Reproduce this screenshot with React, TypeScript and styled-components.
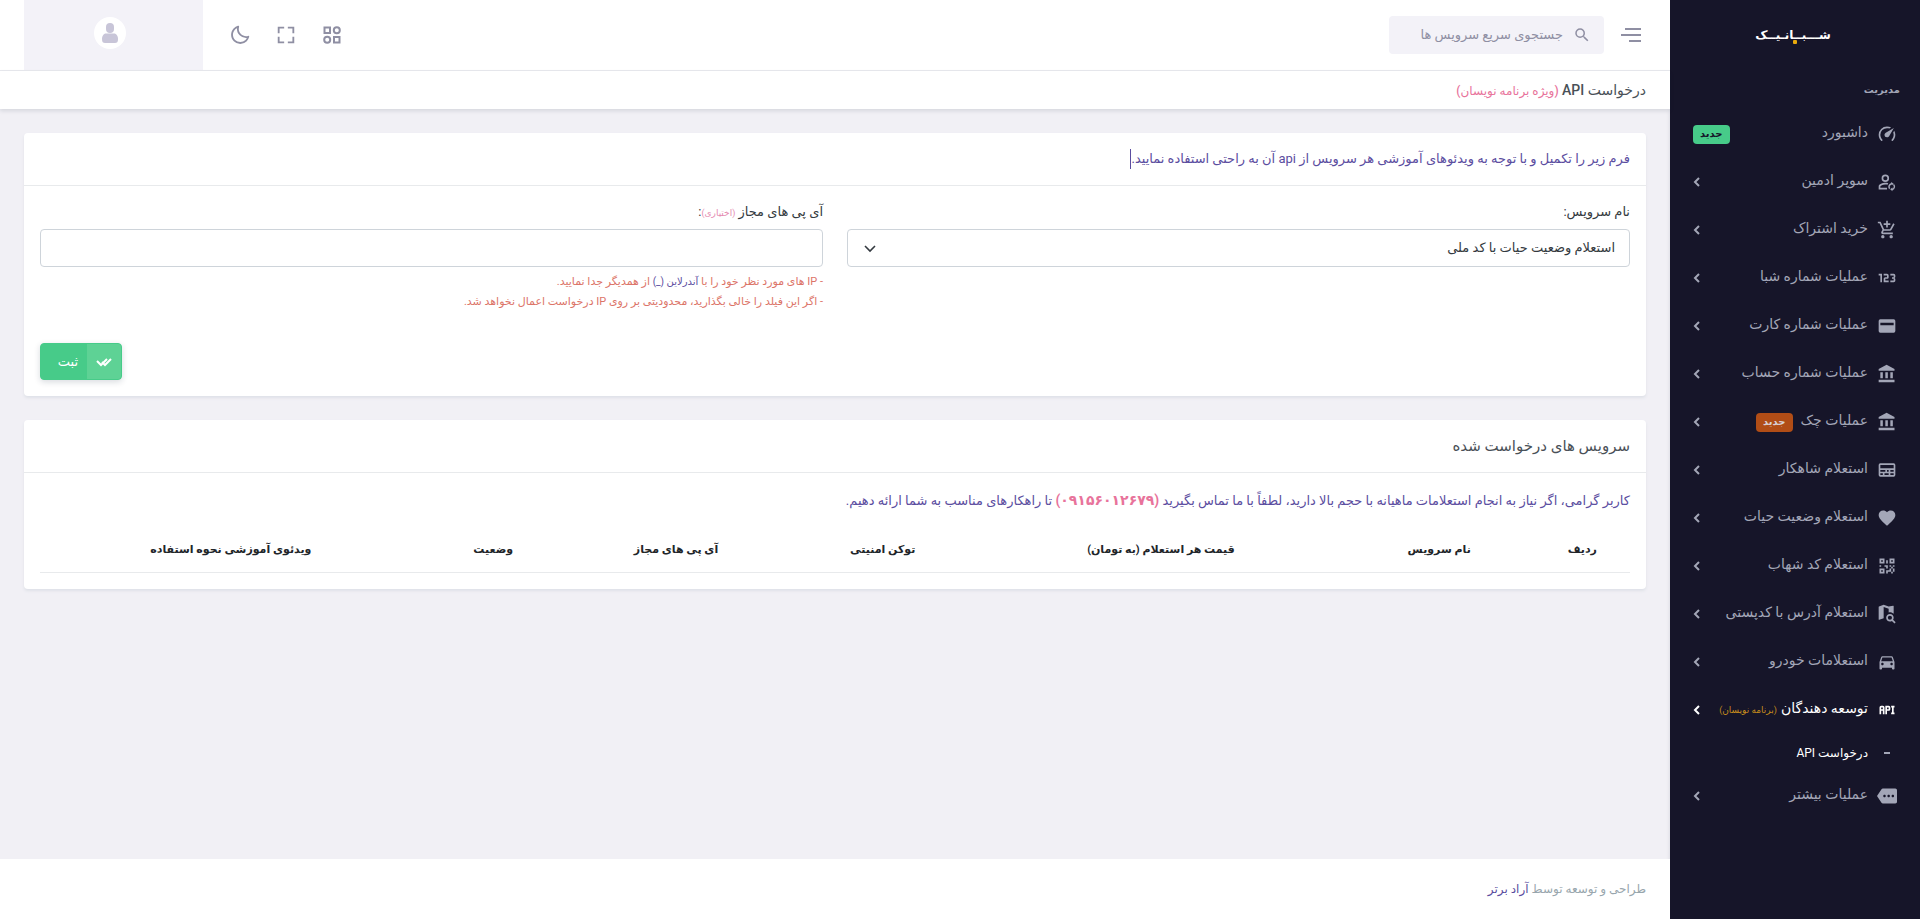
import React from "react";
import styled, { createGlobalStyle, css } from "styled-components";
import { BiFullscreen, BiMoon } from "react-icons/bi";
import { MdAddShoppingCart, MdDirectionsCar, MdFavorite, MdMore, MdSearch } from "react-icons/md";

const GlobalStyle = createGlobalStyle`
  *, *::before, *::after { box-sizing: border-box; }
  body {
    margin: 0;
    background: #f1f0f5;
    color: #495057;
    font-family: Roboto, "DejaVu Sans", sans-serif;
    font-size: 13px;
    line-height: 20px;
  }
  button, input, select { font: inherit; color: inherit; }
  h1, h2, p, ul { margin: 0; padding: 0; font-weight: 400; }
  small, strong { line-height: 1; }
  ul { list-style: none; }
  a { color: inherit; text-decoration: none; }
`;

const Page = styled.div`
  display: flex;
  min-height: 100vh;
`;

/* ---------- sidebar ---------- */

const Sidebar = styled.aside`
  flex: 0 0 250px;
  background: #161529;
  color: #a3a6b7;
  box-shadow: 0 2px 4px rgba(15, 34, 58, 0.12);
`;

const Logo = styled.a`
  position: relative;
  display: flex;
  justify-content: center;
  align-items: center;
  height: 70px;
  padding-right: 4px;
  color: #fff;
  font-size: 12px;
  font-weight: 700;

  &::after {
    content: "";
    position: absolute;
    top: 40px;
    left: 123px;
    width: 4px;
    height: 4px;
    border-radius: 1px;
    background: #e8a90c;
  }
`;

const MenuTitle = styled.div`
  padding: 10px 20px;
  font-size: 10px;
  font-weight: 700;
`;

const MenuLink = styled.a<{ $active?: boolean }>`
  display: flex;
  align-items: center;
  height: 48px;
  padding: 0 20px 0 22px;
  font-size: 14px;
  white-space: nowrap;
  ${(p) => p.$active && css`color: #fff; font-weight: 500;`}
`;

const MenuIcon = styled.span`
  display: flex;
  justify-content: center;
  width: 26px;
  margin-left: 6px;
  svg { display: block; width: 20px; height: 20px; fill: currentColor; }
`;

const MenuText = styled.span`
  padding-bottom: 4px;
`;

const Badge = styled.span<{ $tone: "green" | "orange" }>`
  height: 19px;
  padding: 0 7px;
  border-radius: 4px;
  font-size: 10px;
  font-weight: 700;
  line-height: 18px;
  ${(p) =>
    p.$tone === "green"
      ? css`background: #47cb89; color: #161529; margin-right: auto; margin-left: 1px;`
      : css`background: #b14d16; color: #d8cfd3; margin-right: 8px;`}
`;

const MenuNote = styled.small`
  margin-right: 4px;
  color: #c88d1c;
  font-size: 9px;
  font-weight: 400;
`;

const Arrow = styled.svg`
  width: 10px;
  height: 10px;
  margin-right: auto;
  fill: none;
  stroke: currentColor;
  stroke-width: 2;
`;

const SubLink = styled.a`
  display: flex;
  align-items: center;
  height: 38px;
  padding: 0 20px;
  color: #fff;
  font-size: 12px;
`;

const Dash = styled.span`
  width: 6px;
  height: 2px;
  margin: 0 10px 0 16px;
  background: #a3a6b7;
`;

/* ---------- main column ---------- */

const Main = styled.main`
  display: flex;
  flex: 1;
  flex-direction: column;
  min-width: 0;
`;

const Topbar = styled.header`
  display: flex;
  align-items: center;
  height: 71px;
  padding: 0 24px;
  border-bottom: 1px solid #e8e9ee;
  background: #fff;
`;

const IconButton = styled.button`
  display: flex;
  justify-content: center;
  align-items: center;
  width: 46px;
  height: 70px;
  padding: 0;
  border: 0;
  background: none;
  color: #8f8fa3;
  cursor: pointer;
  svg { width: 22px; height: 22px; }
`;

const MenuToggle = styled(IconButton)`
  width: 30px;
  justify-content: flex-start;
  padding-right: 4px;
  svg { width: 22px; height: 16px; }
`;

const SearchBox = styled.label`
  display: flex;
  align-items: center;
  gap: 10px;
  width: 215px;
  height: 38px;
  margin-right: 12px;
  padding: 0 13px;
  border-radius: 4px;
  background: #f3f2f8;
  color: #8f8fa3;
  svg { flex: none; width: 18px; height: 18px; }
`;

const SearchInput = styled.input`
  flex: 1;
  min-width: 0;
  padding: 0;
  border: 0;
  outline: 0;
  background: none;
  &::placeholder { color: #8f8fa3; opacity: 1; }
`;

const Tools = styled.div`
  display: flex;
  margin-right: auto;
  margin-left: 14px;
`;

const Profile = styled.button`
  display: flex;
  justify-content: center;
  align-items: center;
  width: 179px;
  height: 70px;
  padding: 0 7px 4px 0;
  border: 0;
  background: #f3f2f8;
  cursor: pointer;
`;

const TitleBar = styled.div`
  display: flex;
  align-items: center;
  height: 38px;
  padding: 0 24px;
  background: #fff;
  box-shadow: 0 2px 4px rgba(15, 34, 58, 0.12);
`;

const PageTitle = styled.h1`
  font-size: 14px;
  font-weight: 500;
`;

const Pink = styled.small`
  color: #e8739b;
  font-size: 12px;
`;

const Content = styled.div`
  display: flex;
  flex: 1;
  flex-direction: column;
  gap: 24px;
  padding: 24px;
`;

const Card = styled.section`
  border-radius: 4px;
  background: #fff;
  box-shadow: 0 2px 3px #dfe1e8;
`;

const CardHeader = styled.div`
  display: flex;
  align-items: center;
  height: 53px;
  padding: 0 16px;
  border-bottom: 1px solid #e8eaec;
`;

const CardBody = styled.div`
  padding: 16px;
`;

const Typed = styled.p`
  border-left: 1px solid #5b4da0;
  color: #5b4da0;
`;

const CardTitle = styled.h2`
  font-size: 15px;
`;

const Fields = styled.div`
  display: grid;
  grid-template-columns: 1fr 1fr;
  gap: 24px;
`;

const Label = styled.label`
  display: block;
  height: 20px;
  margin-bottom: 7px;
  color: #343a40;
`;

const Optional = styled.small`
  color: #e58bb0;
  font-size: 9px;
`;

const control = css`
  display: block;
  width: 100%;
  height: 38px;
  padding: 0 14px;
  border: 1px solid #ced4da;
  border-radius: 4px;
  background: #fff;
  outline: 0;
`;

const TextInput = styled.input`
  ${control}
`;

const SelectWrap = styled.div`
  position: relative;
  svg {
    position: absolute;
    top: 13px;
    left: 17px;
    width: 12px;
    height: 12px;
    fill: none;
    stroke: #343a40;
    pointer-events: none;
  }
`;

const Select = styled.select`
  ${control}
  appearance: none;
  color: #343a40;
`;

const Hints = styled.div`
  padding-top: 5px;
  color: #dc7468;
  font-size: 11px;
`;

const Underline = styled.span`
  color: #5b4da0;
  font-size: 10px;
  line-height: 1;
`;

const Submit = styled.button`
  display: flex;
  align-items: center;
  height: 37px;
  margin: 31px auto 0 0;
  padding: 0;
  overflow: hidden;
  border: 1px solid #47cb89;
  border-radius: 4px;
  background: #47cb89;
  color: #fff;
  box-shadow: 0 2px 6px rgba(15, 34, 58, 0.16);
  cursor: pointer;
`;

const SubmitIcon = styled.span`
  display: flex;
  justify-content: center;
  align-items: center;
  width: 34px;
  height: 100%;
  background: #5ed295;
`;

const SubmitText = styled.span`
  width: 46px;
  padding-right: 9px;
  text-align: right;
`;

const Notice = styled.p`
  padding-top: 2px;
  color: #5b4da0;
`;

const Phone = styled.strong`
  color: #e8739b;
  font-size: 14px;
`;

const Table = styled.table`
  width: 100%;
  margin-top: 18px;
  border-collapse: collapse;
  table-layout: fixed;
`;

const Th = styled.th<{ $width: number }>`
  width: ${(p) => p.$width}%;
  height: 43px;
  padding: 0;
  border-bottom: 1px solid #e8eaec;
  color: #212529;
  font-size: 11px;
  text-align: center;
  white-space: nowrap;
`;

const Footer = styled.footer`
  height: 60px;
  padding: 20px 24px;
  background: #fff;
  color: #98a6ad;
  font-size: 12px;
`;

const FooterLink = styled.a`
  color: #5b4da0;
`;

/* ---------- icons ---------- */

const Glyph = ({ d }: { d: string }) => (
  <svg viewBox="0 0 24 24" aria-hidden="true">
    <path fillRule="evenodd" d={d} />
  </svg>
);

const speedometer =
  "M12,16A3,3 0 0,1 9,13C9,11.88 9.61,10.9 10.5,10.39L20.21,4.77L14.68,14.35C14.18,15.33 13.17,16 12,16M12,3C13.81,3 15.5,3.5 16.97,4.32L14.87,5.53C14,5.19 13,5 12,5A8,8 0 0,0 4,13C4,15.21 4.89,17.21 6.34,18.65C6.74,19.04 6.74,19.67 6.35,20.06C5.96,20.45 5.32,20.45 4.93,20.07C3.12,18.26 2,15.76 2,13A10,10 0 0,1 12,3M22,13C22,15.76 20.88,18.26 19.07,20.07C18.68,20.45 18.05,20.45 17.66,20.06C17.27,19.67 17.27,19.04 17.66,18.65C19.11,17.2 20,15.21 20,13C20,12 19.81,11 19.46,10.1L20.67,8C21.5,9.5 22,11.18 22,13Z";
const numeric =
  "M4,17V9H2V7H6V17H4M22,15C22,16.11 21.1,17 20,17H16V15H20V13H18V11H20V9H16V7H20A2,2 0 0,1 22,9V10.5A1.5,1.5 0 0,1 20.5,12A1.5,1.5 0 0,1 22,13.5V15M14,15V17H8V13C8,11.89 8.9,11 10,11H12V9H8V7H12A2,2 0 0,1 14,9V11C14,12.11 13.1,13 12,13H10V15H14Z";
const card = "M4,4H20A2,2 0 0,1 22,6V18A2,2 0 0,1 20,20H4A2,2 0 0,1 2,18V6A2,2 0 0,1 4,4M4,8V11H20V8Z";
const bank = "M11.5,1L2,6V8H21V6M16,10V17H19V10M2,22H21V19H2M10,10V17H13V10M4,10V17H7V10H4Z";
const cardText =
  "M4,4H20A2,2 0 0,1 22,6V18A2,2 0 0,1 20,20H4A2,2 0 0,1 2,18V6A2,2 0 0,1 4,4M4,6V10H20V6ZM4,12V14H10V12ZM12,12V14H14V12ZM16,12V14H20V12ZM4,16V18H7V16ZM9,16V18H14V16ZM16,16V18H20V16Z";
const qrcode =
  "M3,11H5V13H3V11M11,5H13V9H11V5M9,11H13V15H11V13H9V11M15,11H17V13H19V11H21V13H19V15H21V19H19V21H17V19H13V21H11V17H15V15H17V13H15V11M19,19V15H17V19H19M15,3H21V9H15V3M17,5V7H19V5H17M3,3H9V9H3V3M5,5V7H7V5H5M3,15H9V21H3V15M5,17V19H7V17H5Z";
const mapSearch =
  "M15.5,12C18,12 20,14 20,16.5C20,17.38 19.75,18.21 19.31,18.9L22.39,22L21,23.39L17.88,20.32C17.19,20.75 16.37,21 15.5,21C13,21 11,19 11,16.5C11,14 13,12 15.5,12M15.5,14A2.5,2.5 0 0,0 13,16.5A2.5,2.5 0 0,0 15.5,19A2.5,2.5 0 0,0 18,16.5A2.5,2.5 0 0,0 15.5,14M19.5,2A0.5,0.5 0 0,1 20,2.5V11.8C18.8,10.7 17.3,10 15.5,10C14.9,10 14.4,10.1 14,10.2V5.7L8,3.6V17L2.7,19L2.5,19A0.5,0.5 0 0,1 2,18.5V3.4C2,3.1 2.1,3 2.4,2.9L8,1L14,3.1L19.3,2Z";
const userSync =
  "M10,3A4.5,4.5 0 1,1 10,12A4.5,4.5 0 1,1 10,3M10,5A2.5,2.5 0 1,0 10,10A2.5,2.5 0 1,0 10,5ZM10,13C11.3,13 12.5,13.2 13.5,13.5L12.6,15.3C11.8,15.1 10.9,15 10,15C7,15 4,16.5 4,17.5V19H12V21H2V17.5C2,14.5 7,13 10,13ZM17,12L20,14.2L18,16V14.9A2.8,2.8 0 0,0 15.9,19.3L14.6,20.6A4.6,4.6 0 0,1 17,13.2ZM20.4,14.4A4.6,4.6 0 0,1 18.5,22V23.2L15.8,20.8L18.5,18.6V20.2A2.8,2.8 0 0,0 19.2,15.7Z";
const api =
  "M7,7H5A2,2 0 0,0 3,9V17H5V13H7V17H9V9A2,2 0 0,0 7,7M7,11H5V9H7M14,7H10V17H12V13H14A2,2 0 0,0 16,11V9A2,2 0 0,0 14,7M14,11H12V9H14M20,9V15H21V17H17V15H18V9H17V7H21V9Z";

interface Item {
  label: string;
  icon: React.ReactNode;
  badge?: "green" | "orange";
  note?: string;
  sub?: string;
}

const items: Item[] = [
  { label: "داشبورد", icon: <Glyph d={speedometer} />, badge: "green" },
  { label: "سوپر ادمین", icon: <Glyph d={userSync} /> },
  { label: "خرید اشتراک", icon: <MdAddShoppingCart /> },
  { label: "عملیات شماره شبا", icon: <Glyph d={numeric} /> },
  { label: "عملیات شماره کارت", icon: <Glyph d={card} /> },
  { label: "عملیات شماره حساب", icon: <Glyph d={bank} /> },
  { label: "عملیات چک", icon: <Glyph d={bank} />, badge: "orange" },
  { label: "استعلام شاهکار", icon: <Glyph d={cardText} /> },
  { label: "استعلام وضعیت حیات", icon: <MdFavorite /> },
  { label: "استعلام کد شهاب", icon: <Glyph d={qrcode} /> },
  { label: "استعلام آدرس با کدپستی", icon: <Glyph d={mapSearch} /> },
  { label: "استعلامات خودرو", icon: <MdDirectionsCar /> },
  { label: "توسعه دهندگان", icon: <Glyph d={api} />, note: "(برنامه نویسان)", sub: "درخواست API" },
  { label: "عملیات بیشتر", icon: <MdMore /> },
];

const columns: [string, number][] = [
  ["ردیف", 6],
  ["نام سرویس", 12],
  ["قیمت هر استعلام (به تومان)", 23],
  ["توکن امنیتی", 12],
  ["آی پی های مجاز", 14],
  ["وضعیت", 9],
  ["ویدئوی آموزشی نحوه استفاده", 24],
];

export default function App() {
  return (
    <Page dir="rtl" lang="fa">
      <GlobalStyle />
      <Sidebar>
        <Logo href="#">شـــبــانـیــک</Logo>
        <MenuTitle>مدیریت</MenuTitle>
        <nav>
          <ul>
            {items.map((item) => (
              <li key={item.label}>
                <MenuLink href="#" $active={!!item.sub}>
                  <MenuIcon>{item.icon}</MenuIcon>
                  <MenuText>{item.label}</MenuText>
                  {item.note && <MenuNote>{item.note}</MenuNote>}
                  {item.badge && <Badge $tone={item.badge}>جدید</Badge>}
                  {item.badge !== "green" && (
                    <Arrow viewBox="0 0 10 10" aria-hidden="true">
                      <path d="M7 1L3 5l4 4" />
                    </Arrow>
                  )}
                </MenuLink>
                {item.sub && (
                  <SubLink href="#">
                    <Dash />
                    {item.sub}
                  </SubLink>
                )}
              </li>
            ))}
          </ul>
        </nav>
      </Sidebar>

      <Main>
        <Topbar>
          <MenuToggle aria-label="منو">
            <svg viewBox="0 0 22 16" fill="none" stroke="currentColor" strokeWidth="2">
              <path d="M5 2h16M1 8h20M9 14h12" />
            </svg>
          </MenuToggle>
          <SearchBox>
            <MdSearch />
            <SearchInput type="search" placeholder="جستجوی سریع سرویس ها" />
          </SearchBox>
          <Tools>
            <IconButton aria-label="برنامه ها">
              <svg viewBox="0 0 22 22" fill="none" stroke="currentColor" strokeWidth="2">
                <path d="M3.500 3.500h5.500v5.500h-5.500zM13 13h5.500v5.500h-5.500z" />
                <circle cx="15.800" cy="6.200" r="3" />
                <circle cx="6.200" cy="15.800" r="3" />
              </svg>
            </IconButton>
            <IconButton aria-label="تمام صفحه"><BiFullscreen /></IconButton>
            <IconButton aria-label="حالت شب"><BiMoon /></IconButton>
          </Tools>
          <Profile aria-label="حساب کاربری">
            <svg width="32" height="32" viewBox="0 0 32 32">
              <circle cx="16" cy="16" r="16" fill="#fff" />
              <rect x="12" y="6" width="8" height="10" rx="4" fill="#c8c5d8" />
              <path d="M12 16.500h8c2.500 0 4 2.500 4 5.500s-1 4-3 4H11c-2 0-3-1-3-4s1.500-5.500 4-5.500z" fill="#c8c5d8" />
            </svg>
          </Profile>
        </Topbar>
        <TitleBar>
          <PageTitle>
            درخواست API <Pink>(ویژه برنامه نویسان)</Pink>
          </PageTitle>
        </TitleBar>

        <Content>
          <Card>
            <CardHeader>
              <Typed>فرم زیر را تکمیل و با توجه به ویدئوهای آموزشی هر سرویس از api آن به راحتی استفاده نمایید.</Typed>
            </CardHeader>
            <CardBody>
              <Fields>
                <div>
                  <Label htmlFor="service">نام سرویس:</Label>
                  <SelectWrap>
                    <Select id="service">
                      <option>استعلام وضعیت حیات با کد ملی</option>
                    </Select>
                    <svg viewBox="0 0 12 12" strokeWidth="1.6" aria-hidden="true">
                      <path d="M1 4l5 5 5-5" />
                    </svg>
                  </SelectWrap>
                </div>
                <div>
                  <Label htmlFor="ips">
                    آی پی های مجاز <Optional>(اختیاری)</Optional>:
                  </Label>
                  <TextInput id="ips" type="text" />
                  <Hints>
                    <p>
                      - IP های مورد نظر خود را با <Underline>آندرلاین (_)</Underline> از همدیگر جدا نمایید.
                    </p>
                    <p>- اگر این فیلد را خالی بگذارید، محدودیتی بر روی IP درخواست اعمال نخواهد شد.</p>
                  </Hints>
                </div>
              </Fields>
              <Submit type="button">
                <SubmitIcon>
                  <svg width="16" height="12" viewBox="0 0 16 12" fill="none" stroke="currentColor" strokeWidth="2">
                    <path d="M1 5l4 4 6-6M6 6l3 3 6-6" />
                  </svg>
                </SubmitIcon>
                <SubmitText>ثبت</SubmitText>
              </Submit>
            </CardBody>
          </Card>

          <Card>
            <CardHeader>
              <CardTitle>سرویس های درخواست شده</CardTitle>
            </CardHeader>
            <CardBody>
              <Notice>
                کاربر گرامی، اگر نیاز به انجام استعلامات ماهیانه با حجم بالا دارید، لطفاً با ما تماس بگیرید{" "}
                <Phone>(۰۹۱۵۶۰۱۲۶۷۹)</Phone> تا راهکارهای مناسب به شما ارائه دهیم.
              </Notice>
              <Table>
                <thead>
                  <tr>
                    {columns.map(([name, width]) => (
                      <Th key={name} $width={width}>{name}</Th>
                    ))}
                  </tr>
                </thead>
              </Table>
            </CardBody>
          </Card>
        </Content>

        <Footer>
          طراحی و توسعه توسط <FooterLink href="#">آراد برتر</FooterLink>
        </Footer>
      </Main>
    </Page>
  );
}
